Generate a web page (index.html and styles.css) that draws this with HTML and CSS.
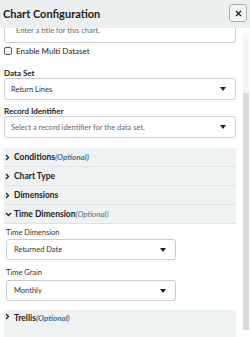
FILE: index.html
```html
<!DOCTYPE html>
<html lang="en">
<head>
    <meta charset="UTF-8">
    <meta name="viewport" content="width=device-width, initial-scale=1.0">
    <title>Chart Configuration</title>
    <link rel="stylesheet" href="styles.css">
</head>
<body>
    <div class="panel">
        <header class="panel_head">
            <h1>Chart Configuration</h1>
            <div class="close">
                <svg width="7" height="7" viewBox="0 0 7 7"><path d="M1 1L6 6M6 1L1 6" stroke="#222" stroke-width="1.3"/></svg>
            </div>
        </header>
        <div class="panel_body">
            <div class="content">
                <div class="input title_input">Enter a title for this chart.</div>

                <div class="check"><span class="box"></span>Enable Multi Dataset</div>

                <div class="label strong">Data Set</div>
                <div class="select">
                    <span>Return Lines</span>
                    <svg class="caret" width="6" height="4" viewBox="0 0 6 4"><path d="M0 0H6L3 4Z" fill="#222"/></svg>
                </div>

                <div class="label strong record">Record Identifier</div>
                <div class="select">
                    <span class="placeholder">Select a record identifier for the data set.</span>
                    <svg class="caret" width="6" height="4" viewBox="0 0 6 4"><path d="M0 0H6L3 4Z" fill="#222"/></svg>
                </div>

                <div class="sections">
                    <div class="sec">
                        <svg class="chev" width="5" height="7" viewBox="0 0 5 7"><path d="M1 1L3.5 3.5L1 6" fill="none" stroke="#222" stroke-width="1.3"/></svg>
                        <b>Conditions</b><i class="opt bold">(Optional)</i>
                    </div>
                    <div class="sec">
                        <svg class="chev" width="5" height="7" viewBox="0 0 5 7"><path d="M1 1L3.5 3.5L1 6" fill="none" stroke="#222" stroke-width="1.3"/></svg>
                        <b>Chart Type</b>
                    </div>
                    <div class="sec">
                        <svg class="chev" width="5" height="7" viewBox="0 0 5 7"><path d="M1 1L3.5 3.5L1 6" fill="none" stroke="#222" stroke-width="1.3"/></svg>
                        <b>Dimensions</b>
                    </div>
                    <div class="sec">
                        <svg class="chev open" width="7" height="5" viewBox="0 0 7 5"><path d="M1 1L3.5 3.5L6 1" fill="none" stroke="#222" stroke-width="1.3"/></svg>
                        <b>Time Dimension</b><i class="opt">(Optional)</i>
                    </div>
                    <div class="sec_body">
                        <div class="label">Time Dimension</div>
                        <div class="select small">
                            <span>Returned Date</span>
                            <svg class="caret" width="6" height="4" viewBox="0 0 6 4"><path d="M0 0H6L3 4Z" fill="#222"/></svg>
                        </div>
                        <div class="label grain">Time Grain</div>
                        <div class="select small">
                            <span>Monthly</span>
                            <svg class="caret" width="6" height="4" viewBox="0 0 6 4"><path d="M0 0H6L3 4Z" fill="#222"/></svg>
                        </div>
                    </div>
                    <div class="sec last">
                        <svg class="chev" width="5" height="7" viewBox="0 0 5 7"><path d="M1 1L3.5 3.5L1 6" fill="none" stroke="#222" stroke-width="1.3"/></svg>
                        <b>Trellis</b><i class="opt bold">(Optional)</i>
                    </div>
                </div>
            </div>
            <div class="scrollbar"><div class="thumb"></div></div>
        </div>
    </div>
</body>
</html>
```

FILE: styles.css
```css
*{
    margin: 0;
    padding: 0;
    box-sizing: border-box;
}
body {
    width: 250px;
    height: 337px;
    overflow: hidden;
    background-color: #fff;
    font-family: Lato, "Open Sans", sans-serif;
    font-size: 7.5px;
    color: #222;
}
.panel {
    height: 337px;
    display: flex;
    flex-direction: column;
}
.panel_head {
    height: 28px;
    flex: none;
    background-color: #eceff0;
    display: flex;
    align-items: center;
    justify-content: space-between;
    padding: 0 3px 0 3px;
    position: relative;
    z-index: 1;
}
.panel_head h1 {
    font-size: 11px;
    font-weight: 700;
    color: #1b1b1b;
    margin-top: -2px;
}
.close {
    width: 18px;
    height: 18px;
    border: 1px solid #a9abad;
    border-radius: 3px;
    background-color: #f3f4f5;
    display: flex;
    align-items: center;
    justify-content: center;
    margin-top: -2px;
}
.panel_body {
    flex: 1;
    display: flex;
    overflow: hidden;
}
.content {
    width: 236px;
    padding-left: 4px;
    flex: none;
}
.input {
    border: 1px solid #c9cbcd;
    border-radius: 3px;
    color: #666;
}
.title_input {
    height: 23px;
    margin-top: -8px;
    padding: 5px 10px 0 11px;
    line-height: 10px;
}
.check {
    display: flex;
    align-items: center;
    margin-top: 3px;
    height: 10px;
    font-size: 8px;
}
.check .box {
    width: 8px;
    height: 8px;
    border: 1px solid #555;
    border-radius: 2px;
    margin-right: 4px;
}
.label {
    height: 10px;
    line-height: 10px;
    margin-top: 12px;
    font-size: 7.5px;
    color: #333;
}
.label.strong {
    font-weight: 700;
    color: #222;
    font-size: 8px;
}
.label.record {
    margin-top: 6px;
}
.select {
    height: 22px;
    border: 1px solid #c9cbcd;
    border-radius: 3px;
    display: flex;
    align-items: center;
    justify-content: space-between;
    padding: 0 9px 0 6px;
    color: #333;
}
.select.small {
    width: 170px;
    height: 21px;
    padding-left: 7px;
}
.placeholder {
    color: #666;
}
.sections {
    margin-top: 10px;
}
.sec {
    height: 19px;
    background-color: #eef2f2;
    border-bottom: 1px solid #e0e3e3;
    display: flex;
    align-items: center;
    padding-left: 1px;
    font-size: 8.5px;
}
.sec .chev {
    margin-right: 4px;
}
.sec .chev.open {
    margin-right: 2px;
}
.sec b {
    font-weight: 700;
    color: #222;
}
.opt {
    color: #4f6f8f;
    font-size: 8px;
}
.opt.bold {
    font-weight: 700;
}
.sec_body {
    padding: 4px 0 9px 2px;
}
.sec_body .label {
    margin-top: 0;
    margin-bottom: 1px;
}
.sec_body .label.grain {
    margin-top: 8px;
    margin-bottom: 2px;
}
.sec.last {
    height: 30px;
    align-items: flex-start;
    padding-top: 3px;
    border-bottom: none;
}
.scrollbar {
    width: 6px;
    margin: 5px 1px 7px 7px;
    background-color: #f4f5f5;
    padding-top: 60px;
    display: flex;
}
.thumb {
    flex: 1;
    background-color: #d9dadb;
}
```
